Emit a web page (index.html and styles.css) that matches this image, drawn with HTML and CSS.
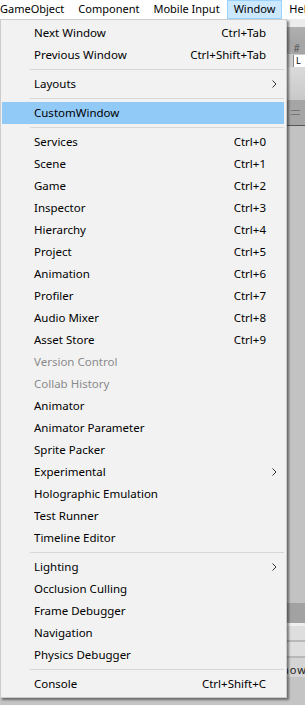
FILE: index.html
```html
<!DOCTYPE html>
<html>
<head>
<meta charset="utf-8">
<link rel="stylesheet" href="styles.css">
</head>
<body>
<div class="menubar">
  <span class="mb-item first">GameObject</span>
  <span class="mb-item">Component</span>
  <span class="mb-item">Mobile Input</span>
  <span class="mb-item active">Window</span>
  <span class="mb-item">Help</span>
</div>

<div class="editor">
  <div class="band b-top"></div>
  <div class="band b-toolbar"></div>
  <div class="band b-hash"><span class="hash">#</span></div>
  <div class="band b-tabs"><span class="tab">L</span></div>
  <div class="band b-light"></div>
  <div class="band b-handle"><span class="handle"></span></div>
  <div class="band b-main"></div>
  <div class="band b-dark"></div>
  <div class="band b-field"></div>
  <div class="band b-field"></div>
  <div class="band b-row"><span class="row-text">Show</span></div>
</div>

<div class="dropdown">
  <div class="item"><span class="label">Next Window</span><span class="sc">Ctrl+Tab</span></div>
  <div class="item"><span class="label">Previous Window</span><span class="sc">Ctrl+Shift+Tab</span></div>
  <div class="sep"></div>
  <div class="item"><span class="label">Layouts</span><span class="sc"></span><svg class="arrow" width="5" height="8" viewBox="0 0 5 8"><path d="M0.5 0.5 L4 4 L0.5 7.5" fill="none" stroke="#333" stroke-width="1"/></svg></div>
  <div class="sep"></div>
  <div class="item hl"><span class="label">CustomWindow</span></div>
  <div class="sep"></div>
  <div class="item"><span class="label">Services</span><span class="sc">Ctrl+0</span></div>
  <div class="item"><span class="label">Scene</span><span class="sc">Ctrl+1</span></div>
  <div class="item"><span class="label">Game</span><span class="sc">Ctrl+2</span></div>
  <div class="item"><span class="label">Inspector</span><span class="sc">Ctrl+3</span></div>
  <div class="item"><span class="label">Hierarchy</span><span class="sc">Ctrl+4</span></div>
  <div class="item"><span class="label">Project</span><span class="sc">Ctrl+5</span></div>
  <div class="item"><span class="label">Animation</span><span class="sc">Ctrl+6</span></div>
  <div class="item"><span class="label">Profiler</span><span class="sc">Ctrl+7</span></div>
  <div class="item"><span class="label">Audio Mixer</span><span class="sc">Ctrl+8</span></div>
  <div class="item"><span class="label">Asset Store</span><span class="sc">Ctrl+9</span></div>
  <div class="item disabled"><span class="label">Version Control</span></div>
  <div class="item disabled"><span class="label">Collab History</span></div>
  <div class="item"><span class="label">Animator</span></div>
  <div class="item"><span class="label">Animator Parameter</span></div>
  <div class="item"><span class="label">Sprite Packer</span></div>
  <div class="item"><span class="label">Experimental</span><span class="sc"></span><svg class="arrow" width="5" height="8" viewBox="0 0 5 8"><path d="M0.5 0.5 L4 4 L0.5 7.5" fill="none" stroke="#333" stroke-width="1"/></svg></div>
  <div class="item"><span class="label">Holographic Emulation</span></div>
  <div class="item"><span class="label">Test Runner</span></div>
  <div class="item"><span class="label">Timeline Editor</span></div>
  <div class="sep"></div>
  <div class="item"><span class="label">Lighting</span><span class="sc"></span><svg class="arrow" width="5" height="8" viewBox="0 0 5 8"><path d="M0.5 0.5 L4 4 L0.5 7.5" fill="none" stroke="#333" stroke-width="1"/></svg></div>
  <div class="item"><span class="label">Occlusion Culling</span></div>
  <div class="item"><span class="label">Frame Debugger</span></div>
  <div class="item"><span class="label">Navigation</span></div>
  <div class="item"><span class="label">Physics Debugger</span></div>
  <div class="sep"></div>
  <div class="item"><span class="label">Console</span><span class="sc">Ctrl+Shift+C</span></div>
</div>
</body>
</html>
```

FILE: styles.css
```css
html, body {
  margin: 0;
  padding: 0;
}
body {
  width: 305px;
  height: 705px;
  overflow: hidden;
  position: relative;
  background: #c4c4c4;
  font-family: "Noto Sans", "Open Sans", sans-serif;
  font-size: 11.5px;
  color: #000;
}

.menubar {
  height: 19px;
  background: #fff;
  display: flex;
  align-items: stretch;
  white-space: nowrap;
  font-size: 11px;
}
.mb-item {
  padding: 0 6px;
  line-height: 16px;
  border: 1px solid transparent;
}
.mb-item.first {
  margin-left: -7px;
}
.mb-item.active {
  background: #cce8ff;
  border-color: #99d1ff;
}

.editor {
  display: flex;
  flex-direction: column;
}
.band {
  display: flex;
  align-items: center;
  justify-content: flex-end;
}
.b-top { height: 8px; background: #ececec; }
.b-toolbar { height: 17px; background: linear-gradient(#b0b0b0, #a4a4a4); }
.b-hash { height: 10px; background: #a6a6a6; align-items: flex-start; }
.b-tabs { height: 13px; background: #cbcbcb; }
.b-light { height: 33px; background: linear-gradient(#dadada, #c9c9c9); }
.b-handle { height: 25px; background: #a5a5a5; border-bottom: 1px solid #555; }
.b-main { height: 477px; background: #c2c2c2; }
.b-dark { height: 20px; background: #a2a2a2; border-bottom: 3px solid #efefef; }
.b-field { height: 14px; background: #dedede; border-bottom: 2px solid #b8b8b8; }
.b-row {
  flex: 1;
  background: #d4d4d4;
  align-items: flex-start;
  justify-content: flex-start;
  padding-left: 275px;
}

.hash {
  font-size: 10px;
  line-height: 9px;
  color: #555;
  margin-right: 5px;
}
.tab {
  width: 9px;
  height: 12px;
  background: #fff;
  border-left: 1px solid #888;
  font-size: 9px;
  line-height: 12px;
  padding-left: 2px;
}
.handle {
  width: 9px;
  height: 3px;
  border-top: 1px solid #777;
  border-bottom: 1px solid #777;
  margin-right: 5px;
}
.row-text {
  margin-top: 4px;
  font-size: 11px;
  letter-spacing: 1px;
  color: #222;
  white-space: nowrap;
}

.dropdown {
  position: absolute;
  top: 19px;
  left: 0;
  width: 287px;
  box-sizing: border-box;
  padding: 2px 2px 2px 1px;
  background: #f2f2f2;
  border: 1px solid #cccccc;
  box-shadow: 2px 2px 2px rgba(0, 0, 0, 0.45);
}
.item {
  box-sizing: border-box;
  height: 22px;
  padding-bottom: 1px;
  display: grid;
  grid-template-columns: 1fr auto 18px;
  align-items: center;
  padding-left: 32px;
  white-space: nowrap;
}
.item.hl {
  background: #91c9f7;
}
.item.disabled {
  color: #8a8a8a;
}
.sc {
  text-align: right;
}
.arrow {
  margin-left: 6px;
  margin-top: 1px;
}
.sep {
  height: 1px;
  margin: 3px 0 3px 28px;
  background: #d7d7d7;
}
```
